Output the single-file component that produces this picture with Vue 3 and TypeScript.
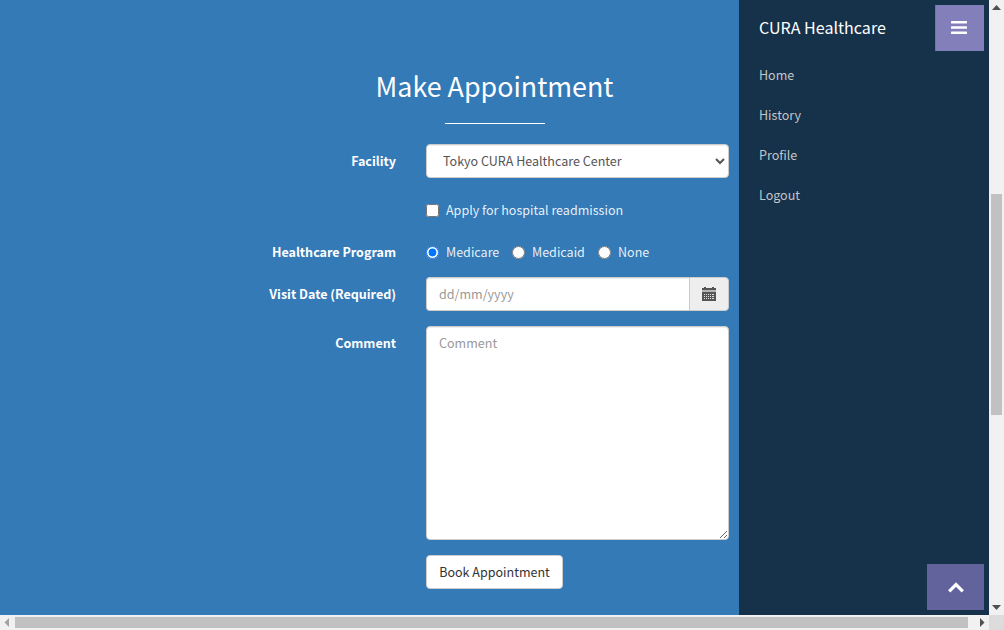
<script setup lang="ts">
import { ref } from 'vue'

const menu: string[] = ['Home', 'History', 'Profile', 'Logout']
const programs: string[] = ['Medicare', 'Medicaid', 'None']
const program = ref<string>('Medicare')
const facility = ref<string>('Tokyo CURA Healthcare Center')
const readmission = ref<boolean>(false)
const visitDate = ref<string>('')
const comment = ref<string>('')
</script>

<template>
  <div class="window">
    <main class="page">
      <h2>Make Appointment</h2>
      <hr class="rule" />
      <form class="form" @submit.prevent>
        <label class="label" for="facility">Facility</label>
        <select id="facility" v-model="facility" class="control select">
          <option>Tokyo CURA Healthcare Center</option>
          <option>Hongkong CURA Healthcare Center</option>
          <option>Seoul CURA Healthcare Center</option>
        </select>

        <label class="option readmission">
          <input v-model="readmission" type="checkbox" />
          <span>Apply for hospital readmission</span>
        </label>

        <span class="label program">Healthcare Program</span>
        <div class="programs">
          <label v-for="item in programs" :key="item" class="option">
            <input v-model="program" type="radio" name="program" :value="item" />
            <span>{{ item }}</span>
          </label>
        </div>

        <label class="label" for="date">Visit Date (Required)</label>
        <div class="group">
          <input id="date" v-model="visitDate" class="control date" type="text" placeholder="dd/mm/yyyy" />
          <span class="addon">
            <svg width="14" height="14" viewBox="0 0 14 14" shape-rendering="crispEdges">
              <path d="M2 0h2v1h6V0h2v1h2v3H0V1h2z" fill="#555" />
              <path d="M0 3h14v2H0z" fill="#b5b5b5" />
              <path d="M0 5h14v9H0z" fill="#555" />
              <path d="M2 7h1v1H2zM4 7h1v1H4zM6 7h1v1H6zM8 7h1v1H8zM10 7h2v1h-2zM2 9h1v1H2zM4 9h1v1H4zM6 9h1v1H6zM8 9h1v1H8zM10 9h2v1h-2zM2 11h1v1H2zM4 11h1v1H4zM6 11h1v1H6zM8 11h1v1H8zM10 11h2v1h-2z" fill="#ddd" />
            </svg>
          </span>
        </div>

        <label class="label" for="comment">Comment</label>
        <textarea id="comment" v-model="comment" class="control comment" placeholder="Comment"></textarea>

        <button class="book" type="submit">Book Appointment</button>
      </form>
    </main>

    <aside class="sidebar">
      <header class="brand">
        <span class="name">CURA Healthcare</span>
        <button class="toggle" type="button" aria-label="Menu">
          <svg width="16" height="14" viewBox="0 0 16 14">
            <path d="M.6 0h14.8q.6 0 .6.6v1.3q0 .6-.6.6H.6q-.6 0-.6-.6V.6Q0 0 .6 0zM.6 5.3h14.8q.6 0 .6.6v1.3q0 .6-.6.6H.6q-.6 0-.6-.6V5.9q0-.6.6-.6zM.6 10.6h14.8q.6 0 .6.6v1.3q0 .6-.6.6H.6q-.6 0-.6-.6v-1.3q0-.6.6-.6z" fill="#fff" />
          </svg>
        </button>
      </header>
      <nav class="menu">
        <a v-for="entry in menu" :key="entry">{{ entry }}</a>
      </nav>
      <button class="to-top" type="button" aria-label="Top">
        <svg width="18" height="12" viewBox="0 0 18 12">
          <path d="M2.200 9.300L9 2.500l6.800 6.800" fill="none" stroke="#fff" stroke-width="3.300" stroke-linejoin="miter" />
        </svg>
      </button>
    </aside>

    <div class="vbar">
      <svg width="15" height="15"><path d="M3 10h9L7.500 5z" fill="#505050" /></svg>
      <div class="vthumb"></div>
      <svg class="end" width="15" height="15"><path d="M3 5h9l-4.500 5z" fill="#505050" /></svg>
    </div>
    <div class="hbar">
      <svg width="15" height="15"><path d="M9 3v9L4.500 7.500z" fill="#a3a3a3" /></svg>
      <div class="hthumb"></div>
      <svg class="right" width="15" height="15"><path d="M6 3v9l4.500-4.500z" fill="#505050" /></svg>
    </div>
    <div class="corner"></div>
  </div>
</template>

<style>
body {
  margin: 0;
  overflow: hidden;
}
</style>

<style scoped>
* {
  box-sizing: border-box;
}
.window {
  display: grid;
  grid-template-columns: 739px 250px 15px;
  grid-template-rows: 615px 15px;
  width: 1004px;
  height: 630px;
  overflow: hidden;
  background: #337ab7;
  color: #fff;
  font-family: "Noto Sans CJK JP", "Noto Sans", sans-serif;
  font-size: 12.54px;
  line-height: 20px;
}
.page {
  padding-top: 69px;
}
h2 {
  width: 989px;
  margin: 0;
  text-align: center;
  font-size: 26.83px;
  font-weight: 400;
  line-height: 33px;
}
.rule {
  width: 100px;
  height: 1px;
  margin: 21px 0 20px 445px;
  border: 0;
  background: #fff;
}
.form {
  display: grid;
  grid-template-columns: 396px 303px;
  grid-template-rows: 34px 64px 35px 49px 229px 34px;
  column-gap: 30px;
}
.label {
  text-align: right;
  font-weight: 700;
  line-height: 34px;
}
.control {
  width: 100%;
  height: 34px;
  margin: 0;
  padding: 6px 12px;
  border: 1px solid #ccc;
  border-radius: 4px;
  background: #fff;
  color: #555;
  font: inherit;
  outline: 0;
  box-shadow: inset 0 1px 1px rgba(0, 0, 0, 0.075);
}
.control::placeholder {
  color: #999;
  opacity: 1;
}
.select {
  padding: 5px 12px 7px;
}
.option {
  display: flex;
  align-items: center;
  gap: 7px;
  height: 20px;
  color: rgba(255, 255, 255, 0.9);
}
.option input {
  width: 13px;
  height: 13px;
  margin: 0;
}
.readmission {
  grid-column: 2;
  align-self: start;
  margin-top: 22px;
}
.program {
  line-height: 20px;
}
.programs {
  display: flex;
  gap: 12px;
}
.programs .option {
  min-width: 74px;
}
.program,
.programs {
  align-self: start;
}
.group {
  display: flex;
}
.date {
  width: 263px;
  padding: 5px 12px 7px;
  border-right: 0;
  border-radius: 4px 0 0 4px;
}
.addon {
  display: flex;
  align-items: center;
  justify-content: center;
  width: 40px;
  height: 34px;
  padding-right: 1px;
  border: 1px solid #ccc;
  border-radius: 0 4px 4px 0;
  background: #eee;
}
.comment {
  height: 214px;
  resize: vertical;
}
.book {
  grid-column: 2;
  justify-self: start;
  width: 137px;
  height: 34px;
  padding: 0;
  border: 1px solid #ccc;
  border-radius: 4px;
  background: #fff;
  color: #333;
  font: inherit;
}
.sidebar {
  display: flex;
  flex-direction: column;
  background: #16314a;
}
.brand {
  display: flex;
  justify-content: space-between;
  padding: 5px 5px 0 20px;
}
.name {
  font-size: 16.07px;
  line-height: 44px;
}
.toggle,
.to-top {
  display: flex;
  align-items: center;
  justify-content: center;
  height: 46px;
  padding: 0;
  border: 0;
}
.toggle {
  width: 49px;
  padding-right: 2px;
  background: #827fbb;
  border-left: 1px solid #7371b0;
}
.menu {
  display: flex;
  flex-direction: column;
  margin-top: 4px;
  padding-left: 20px;
  color: #c4c6c8;
  line-height: 40px;
}
.to-top {
  width: 57px;
  margin: auto 5px 5px auto;
  padding-top: 2px;
  background: #62629d;
}
.vbar {
  display: flex;
  flex-direction: column;
  background: #f1f1f1;
}
.vthumb {
  width: 11px;
  height: 221px;
  margin: 179px 2px 0;
  background: #c1c1c1;
}
.end {
  margin-top: auto;
}
.hbar {
  grid-column: 1 / 3;
  display: flex;
  background: #f1f1f1;
}
.hthumb {
  width: 953px;
  height: 11px;
  margin-top: 2px;
  background: #c1c1c1;
}
.right {
  margin-left: auto;
}
.corner {
  background: #dcdcdc;
}
</style>
